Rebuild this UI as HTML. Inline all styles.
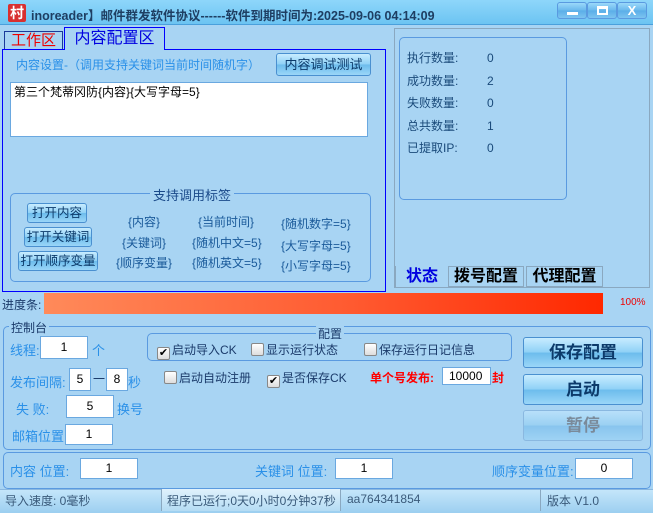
<!DOCTYPE html>
<html><head><meta charset="utf-8"><style>
*{margin:0;padding:0;box-sizing:border-box}
body{width:653px;height:513px;background:#a8d4f3;font-family:"Liberation Sans","Noto Sans CJK SC",sans-serif;font-size:12px;position:relative;overflow:hidden;color:#1a5a9a}
.a{position:absolute;white-space:nowrap}
.btn{position:absolute;border:1px solid #4a90d0;border-radius:3px;background:linear-gradient(#c8ecff,#8ed0f6 50%,#6cbcec 51%,#9ad6f8);color:#0c3a6a;text-align:center;font-size:13px}
.box{position:absolute;background:#fff;border:1px solid #6aa8e0;text-align:center;color:#000;font-size:12px}
.grp{position:absolute;border:1px solid #5a9ae0;border-radius:5px}
.cb{display:inline-block;width:13px;height:13px;border:1px solid #888;border-radius:2px;background:linear-gradient(#fff,#ddd);vertical-align:-2px;margin-right:2px;font-size:11px;line-height:11px;text-align:center;color:#000}
.bb{position:absolute;border:1px solid #5a9ae0;border-radius:3px;background:linear-gradient(#9ad8fa,#68b8ec 50%,#5aaee8 51%,#7cc4f0);}
</style></head><body>
<div class="a" style="left:0;top:0;width:653px;height:25px;background:linear-gradient(#8ed6fa,#6cc4f2);border-bottom:1px solid #4aa0dc"></div>
<div class="a" style="left:8px;top:4px;width:18px;height:18px;background:#d83030;color:#fff;font-weight:bold;font-size:14px;text-align:center;line-height:18px;border-radius:2px">村</div>
<div class="a" style="left:31px;top:5px;font-weight:bold;font-size:12.5px;color:#1e3e62">inoreader】邮件群发软件协议------软件到期时间为:2025-09-06 04:14:09</div>
<div class="bb" style="left:557px;top:2px;width:30px;height:17px"><div style="position:absolute;left:9px;top:9px;width:11px;height:3px;background:#fff"></div></div>
<div class="bb" style="left:587px;top:2px;width:30px;height:17px"><div style="position:absolute;left:9px;top:3px;width:11px;height:9px;border:2px solid #fff;border-top-width:3px"></div></div>
<div class="bb" style="left:617px;top:2px;width:30px;height:17px;color:#fff;font-weight:bold;text-align:center;line-height:15px;font-size:13px">X</div>

<div class="a" style="left:4px;top:31px;width:59px;height:19px;border:1px solid #1a3a9a;border-bottom:none;color:#e00;font-size:15px;text-align:center;line-height:18px">工作区</div>
<div class="a" style="left:64px;top:27px;width:101px;height:23px;border:1px solid #0000ff;border-bottom:none;background:#a8d4f3;color:#0000e0;font-size:16px;text-align:center;line-height:22px;z-index:2">内容配置区</div>
<div class="a" style="left:2px;top:49px;width:384px;height:243px;border:1.5px solid #0000ff"></div>
<div class="a" style="left:16px;top:56px;color:#2a90e8">内容设置-（调用支持关键词当前时间随机字）</div>
<div class="btn" style="left:276px;top:53px;width:95px;height:23px;line-height:21px">内容调试测试</div>
<div class="box" style="left:10px;top:82px;width:358px;height:55px;text-align:left;padding:2px 3px;line-height:14px">第三个梵蒂冈防{内容}{大写字母=5}</div>
<div class="grp" style="left:10px;top:193px;width:361px;height:89px"></div>
<div class="a" style="left:150px;top:185px;background:#a8d4f3;padding:0 3px;font-size:13px;color:#1a4a8a">支持调用标签</div>
<div class="btn" style="left:27px;top:203px;width:60px;height:20px;line-height:18px;font-size:12.5px">打开内容</div>
<div class="btn" style="left:24px;top:227px;width:68px;height:20px;line-height:18px;font-size:12.5px">打开关键词</div>
<div class="btn" style="left:18px;top:251px;width:80px;height:20px;line-height:18px;font-size:12.5px">打开顺序变量</div>
<div class="a" style="left:128px;top:213px">{内容}</div>
<div class="a" style="left:122px;top:234px">{关键词}</div>
<div class="a" style="left:116px;top:254px">{顺序变量}</div>
<div class="a" style="left:198px;top:213px">{当前时间}</div>
<div class="a" style="left:192px;top:234px">{随机中文=5}</div>
<div class="a" style="left:192px;top:254px">{随机英文=5}</div>
<div class="a" style="left:281px;top:215px">{随机数字=5}</div>
<div class="a" style="left:281px;top:237px">{大写字母=5}</div>
<div class="a" style="left:281px;top:257px">{小写字母=5}</div>

<div class="a" style="left:394px;top:28px;width:256px;height:260px;border:1px solid #8aa8c0"></div>
<div class="grp" style="left:399px;top:37px;width:168px;height:163px"></div>
<div class="a" style="left:407px;top:47px;line-height:22.5px;color:#1a4a7a">执行数量:<br>成功数量:<br>失败数量:<br>总共数量:<br>已提取IP:</div>
<div class="a" style="left:487px;top:47px;line-height:22.5px;color:#1a4a7a">0<br>2<br>0<br>1<br>0</div>
<div class="a" style="left:395px;top:266px;width:54px;height:22px;border:1px solid #8aa8c0;border-top:none;background:#a8d4f3;color:#0000e0;font-weight:bold;font-size:16px;text-align:center;line-height:22px">状态</div>
<div class="a" style="left:448px;top:266px;width:76px;height:21px;border:1px solid #8aa8c0;color:#000;font-weight:bold;font-size:16px;text-align:center;line-height:20px">拨号配置</div>
<div class="a" style="left:526px;top:266px;width:77px;height:21px;border:1px solid #8aa8c0;color:#000;font-weight:bold;font-size:16px;text-align:center;line-height:20px">代理配置</div>

<div class="a" style="left:2px;top:296px;color:#1a3a6a">进度条:</div>
<div class="a" style="left:44px;top:293px;width:559px;height:21px;background:linear-gradient(90deg,#ff8a5a,#ff5a30 55%,#ff2800)"></div>
<div class="a" style="left:620px;top:297px;color:#e00;font-size:10px">100%</div>

<div class="grp" style="left:3px;top:326px;width:648px;height:124px"></div>
<div class="a" style="left:9px;top:319px;background:#a8d4f3;padding:0 2px;color:#1a3a6a">控制台</div>
<div class="a" style="left:10px;top:340px;color:#2a90e8;font-size:13px">线程:</div>
<div class="box" style="left:40px;top:336px;width:48px;height:23px;line-height:21px">1</div>
<div class="a" style="left:92px;top:340px;color:#2a90e8;font-size:13px">个</div>
<div class="a" style="left:10px;top:372px;color:#2a90e8;font-size:13px">发布间隔:</div>
<div class="box" style="left:69px;top:368px;width:22px;height:23px;line-height:21px">5</div>
<div class="a" style="left:93px;top:370px;color:#1a3a6a">一</div>
<div class="box" style="left:106px;top:368px;width:22px;height:23px;line-height:21px">8</div>
<div class="a" style="left:128px;top:372px;color:#2a90e8;font-size:13px">秒</div>
<div class="a" style="left:16px;top:399px;color:#2a90e8;font-size:13px">失 败:</div>
<div class="box" style="left:66px;top:395px;width:48px;height:23px;line-height:21px">5</div>
<div class="a" style="left:117px;top:399px;color:#2a90e8;font-size:13px">换号</div>
<div class="a" style="left:12px;top:426px;color:#2a90e8;font-size:13px">邮箱位置</div>
<div class="box" style="left:65px;top:424px;width:48px;height:21px;line-height:19px">1</div>
<div class="grp" style="left:147px;top:333px;width:365px;height:28px"></div>
<div class="a" style="left:316px;top:325px;background:#a8d4f3;padding:0 2px;color:#1a3a6a">配置</div>
<div class="a" style="left:157px;top:341px;color:#1a3a6a"><span class="cb">✔</span>启动导入CK</div>
<div class="a" style="left:251px;top:341px;color:#1a3a6a"><span class="cb"></span>显示运行状态</div>
<div class="a" style="left:364px;top:341px;color:#1a3a6a"><span class="cb"></span>保存运行日记信息</div>
<div class="a" style="left:164px;top:369px;color:#1a3a6a"><span class="cb"></span>启动自动注册</div>
<div class="a" style="left:267px;top:369px;color:#1a3a6a"><span class="cb">✔</span>是否保存CK</div>
<div class="a" style="left:370px;top:369px;color:#f00;font-weight:bold">单个号发布:</div>
<div class="box" style="left:442px;top:367px;width:49px;height:18px;line-height:16px;text-align:left;padding-left:6px">10000</div>
<div class="a" style="left:492px;top:369px;color:#f00;font-weight:bold">封</div>
<div class="btn" style="left:523px;top:337px;width:120px;height:31px;line-height:29px;font-size:17px;font-weight:bold">保存配置</div>
<div class="btn" style="left:523px;top:374px;width:120px;height:31px;line-height:29px;font-size:17px;font-weight:bold">启动</div>
<div class="btn" style="left:523px;top:410px;width:120px;height:31px;line-height:29px;font-size:17px;font-weight:bold;color:#7a8a9a;background:linear-gradient(#b8e0fa,#9ad0f2 50%,#88c4ee 51%,#9ed2f4);border-color:#8ab8e0">暂停</div>

<div class="grp" style="left:3px;top:452px;width:648px;height:37px"></div>
<div class="a" style="left:10px;top:461px;color:#2a90e8;font-size:13px">内容 位置:</div>
<div class="box" style="left:80px;top:458px;width:58px;height:21px;line-height:19px">1</div>
<div class="a" style="left:255px;top:461px;color:#2a90e8;font-size:13px">关键词 位置:</div>
<div class="box" style="left:335px;top:458px;width:58px;height:21px;line-height:19px">1</div>
<div class="a" style="left:492px;top:461px;color:#2a90e8;font-size:13px">顺序变量位置:</div>
<div class="box" style="left:575px;top:458px;width:58px;height:21px;line-height:19px">0</div>

<div class="a" style="left:0;top:489px;width:653px;height:24px;background:linear-gradient(#c4e6fa,#9ccff0);border-top:1px solid #8ab8e0"></div>
<div class="a" style="left:5px;top:492px;color:#3a5a7a">导入速度: 0毫秒</div>
<div class="a" style="left:161px;top:489px;width:180px;height:22px;border-left:1px solid #8aa8c0;border-right:1px solid #8aa8c0;background:linear-gradient(#e0f2fc,#b4dcf4)"></div>
<div class="a" style="left:167px;top:492px;color:#3a5a7a">程序已运行;0天0小时0分钟37秒</div>
<div class="a" style="left:347px;top:492px;color:#3a5a7a">aa764341854</div>
<div class="a" style="left:540px;top:489px;width:1px;height:22px;background:#8aa8c0"></div>
<div class="a" style="left:547px;top:492px;color:#3a5a7a">版本 V1.0</div>
</body></html>
